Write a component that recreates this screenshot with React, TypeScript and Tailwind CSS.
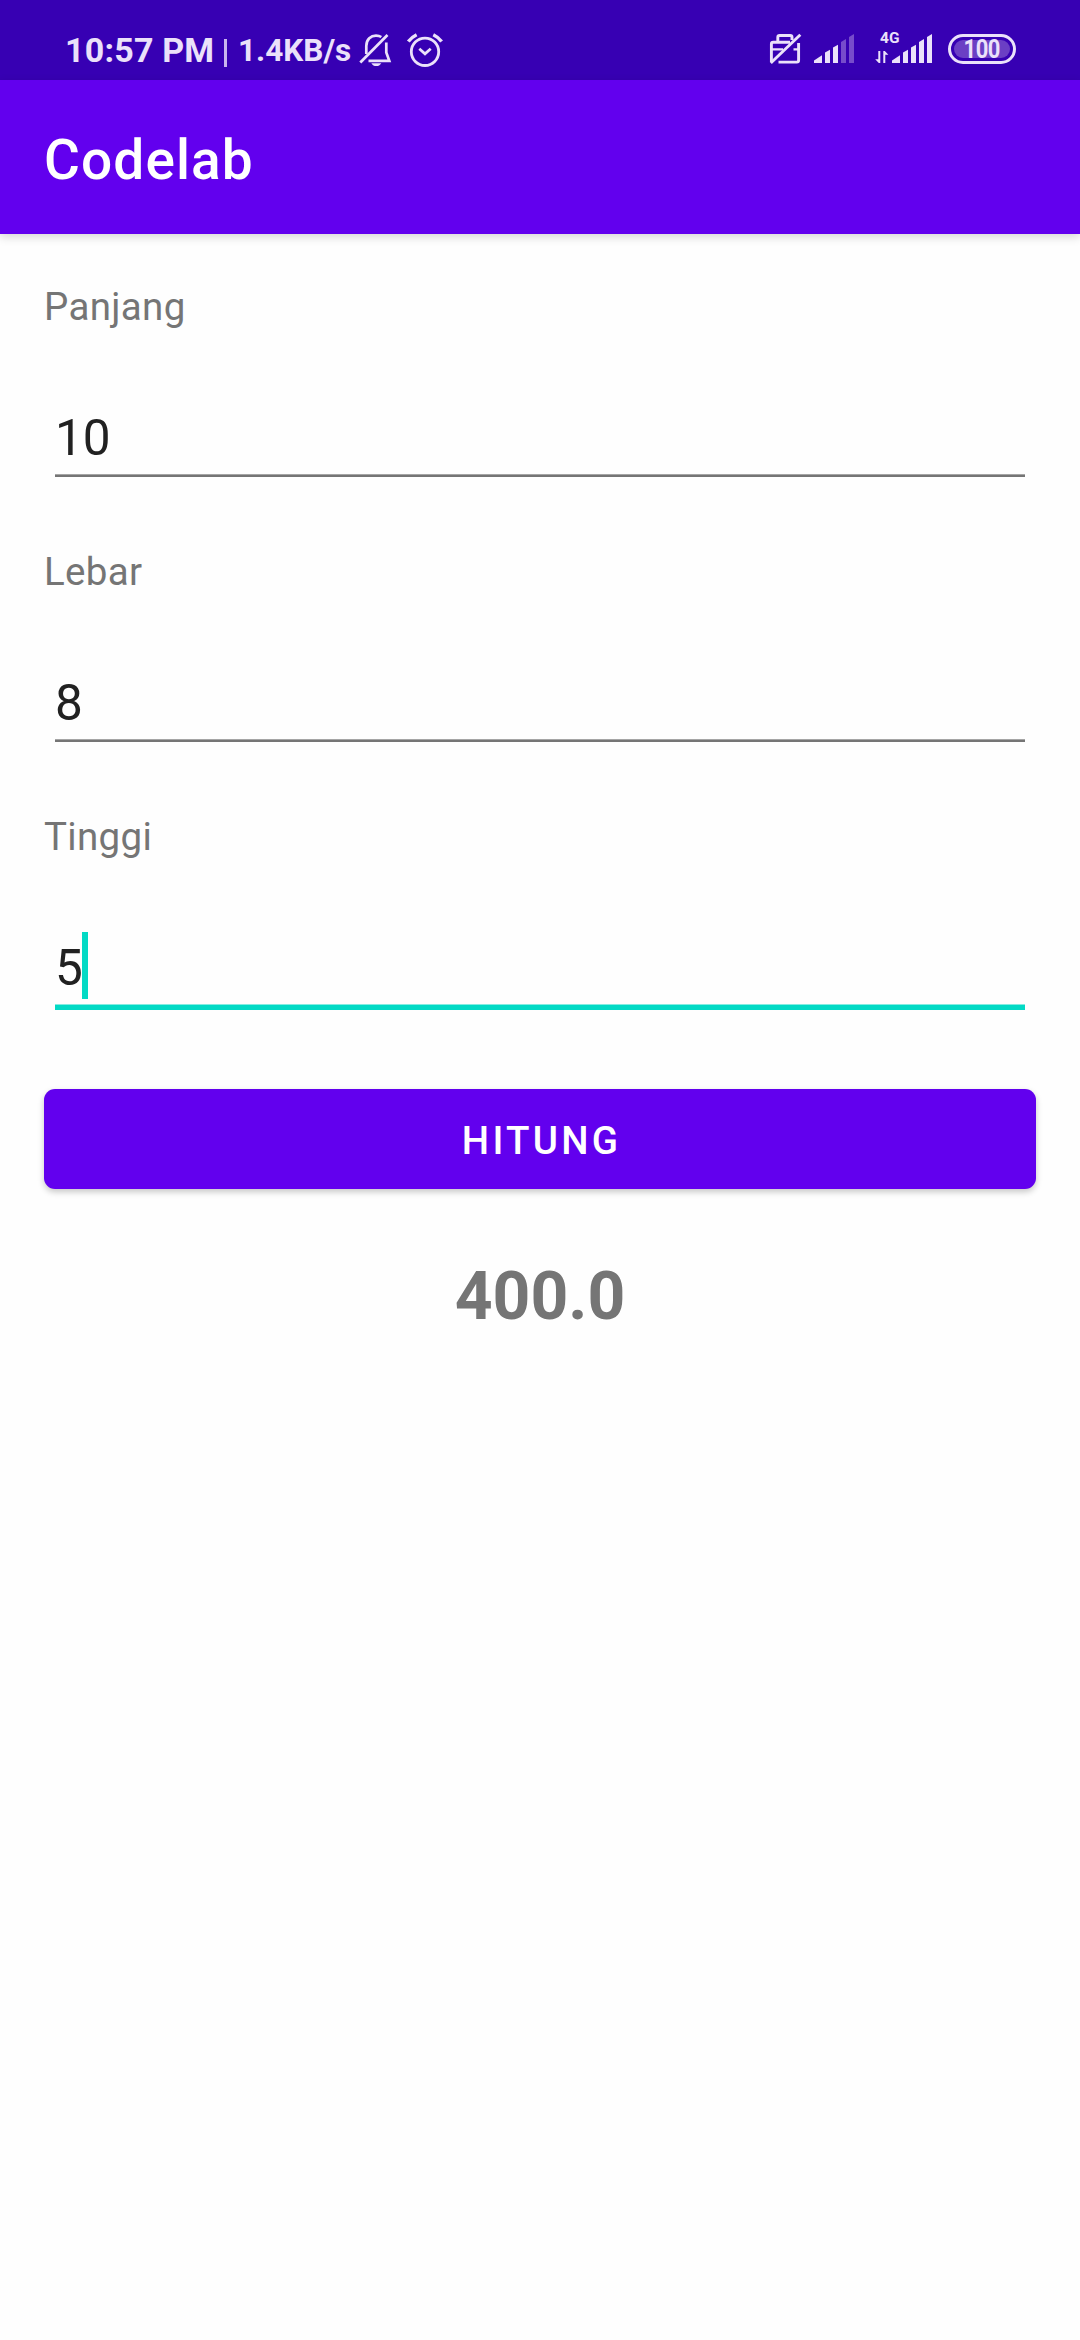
import React from "react";

const INK = "#ebe1fa";

function BellOffIcon() {
  return (
    <svg className="ml-[5px] h-10 w-10 shrink-0" viewBox="356 30 40 40" fill="none" stroke={INK} strokeWidth="2.7">
      <path d="M360.3 62.5L387.5 35" />
      <path d="M366.3 54V46C366.3 39 371 35.6 376 35.6C378 35.6 379.8 36 381.3 37" />
      <path d="M386.3 42.5V52.5L389.3 60.8H368.5" />
      <path d="M371.3 63.2H381.3C380 65.2 378.5 66 376.3 66S372.6 65.2 371.3 63.2Z" fill={INK} stroke="none" />
    </svg>
  );
}

function AlarmIcon() {
  return (
    <svg className="ml-[9px] h-10 w-10 shrink-0" viewBox="405 30 40 40" fill="none" stroke={INK} strokeWidth="2.8">
      <circle cx="425" cy="51.8" r="13.7" />
      <path d="M419.3 48.8L425 53.8L430.7 48.8" />
      <path d="M408.3 41.5C410.5 38.5 413 36.5 416.6 34.7M441.6 41.5C439.5 38.5 437 36.5 433.3 34.7" strokeWidth="3.4" />
    </svg>
  );
}

function CardOffIcon() {
  return (
    <svg className="h-10 w-10 shrink-0" viewBox="766 30 40 40" fill="none" stroke={INK} strokeWidth="2.9">
      <path d="M770.8 63L800.3 34.8" />
      <path d="M771.4 62V44Q771.4 42.2 773.2 42.2H790" />
      <path d="M777.8 42V37.3Q777.8 35.5 779.6 35.5H790.2Q792 35.5 792 37.3V40" />
      <path d="M771 49.3H783M793.5 49.3H799" strokeWidth="2.3" />
      <path d="M798.6 43V60.3Q798.6 62.1 796.8 62.1H778.5" />
    </svg>
  );
}

function SignalIcon({ dim }: { dim: boolean }) {
  const faded = dim ? "#774ccb" : INK;
  return (
    <svg className="h-10 w-10 shrink-0" viewBox="814 30 40 40" fill={INK}>
      <path d="M814 63V60.5L822 55.3V63Z" />
      <path d="M825 63V52.5L830 49.7V63Z" />
      <path d="M833 63V47.5L838 44.7V63Z" />
      <path d="M841 63V42L846 39V63Z" fill={faded} />
      <path d="M849 63V37L854 34V63Z" fill={faded} />
    </svg>
  );
}

function StatusBar() {
  return (
    <div className="flex h-20 items-start bg-[#3700b3] pl-[65px] text-[#ebe1fa]">
      <span className="mt-[30px] w-[150px] text-[34px] leading-10 font-bold tracking-[0.2px] whitespace-nowrap">10:57 PM</span>
      <span className="mt-[39px] ml-[9px] h-7 w-[3px] bg-[#c9b5ee]" />
      <span className="mt-[31px] ml-[11px] w-[113px] text-[31.5px] leading-10 font-bold whitespace-nowrap">1.4KB/s</span>
      <div className="mt-[30px] flex">
        <BellOffIcon />
        <AlarmIcon />
      </div>
      <div className="mt-[30px] ml-auto flex pr-[64px]">
        <CardOffIcon />
        <div className="ml-2">
          <SignalIcon dim />
        </div>
        <div className="ml-[21px] flex w-[57px] justify-end">
          <div className="w-[17px]">
            <div className="ml-[5px] h-4 text-[15.5px] leading-[17px] font-bold">4G</div>
            <svg className="mt-[3px] h-4 w-[17px]" viewBox="875 49 17 16" fill={INK}>
              <path d="M878.3 51H880.3V63H878.8L875.2 59.3H878.3Z" />
              <path d="M885.3 63H883.3V51H884.8L888.4 54.7H885.3Z" />
            </svg>
          </div>
          <SignalIcon dim={false} />
        </div>
        <div className="mt-1 ml-4 flex h-[30px] w-[68px] rounded-full border-[3px] border-[#ebe1fa] p-[3px]">
          <div className="flex h-[18px] flex-1 items-center justify-center rounded-full bg-[#6b3fc4]">
            <span className="mt-px scale-x-88 text-[25px] leading-[18px] font-bold tracking-[-0.5px]">100</span>
          </div>
        </div>
      </div>
    </div>
  );
}

function Field({ label, value, focused = false }: { label: string; value: string; focused?: boolean }) {
  return (
    <div className="h-[265px]">
      <div className="h-[52px] text-[38.5px] leading-[52px] tracking-[0.33px] text-[#757575]">{label}</div>
      <div className="mx-[11px] mt-[69px] flex h-[72px] text-[#212121]">
        <span className="mt-[3px] text-[49.5px] leading-[66px]">{value}</span>
        {focused && <span className="-ml-px h-[67px] w-1.5 bg-[#03dac5]" />}
      </div>
      {focused ? (
        <div className="mx-[11px] h-1.5 border-t border-[#83ece1] bg-[#03dac5]" />
      ) : (
        <div className="mx-[11px] h-[3px] border-t border-[#a5a5a5] bg-[#757575]" />
      )}
    </div>
  );
}

export default function App() {
  return (
    <div className="h-[2340px] w-[1080px] overflow-hidden bg-[#fefefe] font-['Roboto',sans-serif]">
      <StatusBar />
      <header className="flex h-[154px] items-center bg-[#6200ee] pl-11 shadow-[0_3px_9px_rgba(0,0,0,0.16)]">
        <h1 className="mt-1.5 text-[55px] leading-[64px] font-medium tracking-[1.1px] text-white">Codelab</h1>
      </header>
      <main className="px-11 pt-[47px]">
        <Field label="Panjang" value="10" />
        <Field label="Lebar" value="8" />
        <Field label="Tinggi" value="5" focused />
        <button className="mt-[13px] block h-[100px] w-full rounded-[11px] bg-[#6200ee] pt-[3px] pl-[3px] text-center text-[38.5px] leading-[97px] font-medium tracking-[3.25px] text-white shadow-[0_3px_6px_rgba(0,0,0,0.22)]">
          HITUNG
        </button>
        <div className="mt-[69px] text-center text-[66px] leading-[78px] font-bold text-[#757575]">400.0</div>
      </main>
    </div>
  );
}
